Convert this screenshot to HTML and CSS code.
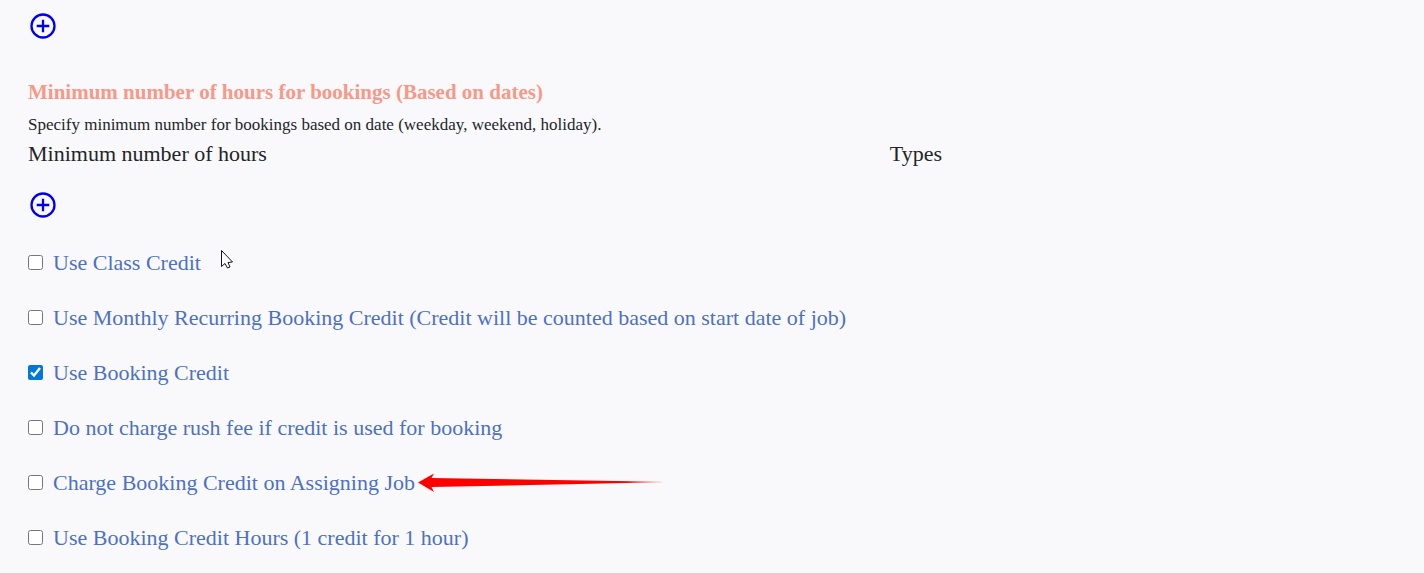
FILE: index.html
```
<!DOCTYPE html>
<html lang="en">
<head>
  <meta charset="UTF-8">
  <meta name="viewport" content="width=device-width, initial-scale=1.0">
  <title>Booking settings</title>
  <link rel="stylesheet" href="styles.css">
</head>
<body>
  <form class="settings">
    <button type="button" class="add-btn" aria-label="Add row">
      <svg width="30" height="30" viewBox="0 0 30 30"><circle cx="15" cy="15" r="11.5"/><path d="M15 8.700v12.600M8.700 15h12.600"/></svg>
    </button>

    <h2 class="section-title">Minimum number of hours for bookings (Based on dates)</h2>
    <p class="section-note">Specify minimum number for bookings based on date (weekday, weekend, holiday).</p>
    <div class="columns">
      <span>Minimum number of hours</span>
      <span>Types</span>
    </div>

    <button type="button" class="add-btn" aria-label="Add minimum hours">
      <svg width="30" height="30" viewBox="0 0 30 30"><circle cx="15" cy="15" r="11.5"/><path d="M15 8.700v12.600M8.700 15h12.600"/></svg>
    </button>

    <div class="options">
      <label class="option"><input type="checkbox" name="class_credit"><span>Use Class Credit</span></label>
      <label class="option"><input type="checkbox" name="monthly_credit"><span>Use Monthly Recurring Booking Credit (Credit will be counted based on start date of job)</span></label>
      <label class="option"><input type="checkbox" name="booking_credit" checked><span>Use Booking Credit</span></label>
      <label class="option"><input type="checkbox" name="no_rush_fee"><span>Do not charge rush fee if credit is used for booking</span></label>
      <label class="option"><input type="checkbox" name="charge_on_assign"><span>Charge Booking Credit on Assigning Job</span></label>
      <label class="option"><input type="checkbox" name="credit_hours"><span>Use Booking Credit Hours (1 credit for 1 hour)</span></label>
    </div>
  </form>

  <svg class="arrow" width="244" height="20" viewBox="0 0 244 20">
    <defs>
      <linearGradient id="tail"><stop offset="0.85" stop-color="#f00"/><stop offset="1" stop-color="#f00" stop-opacity="0.3"/></linearGradient>
    </defs>
    <path fill="url(#tail)" d="M0 9.500 16 0.500 13.500 5 244 8.700V9.300L13.500 14 16 19z"/>
  </svg>
  <svg class="cursor" width="14" height="21" viewBox="0 0 14 21">
    <path d="M1.500 1.500v16l3.500-3 2.500 4.500 2.500-1-2-4.500 4.500-0.500z"/>
  </svg>
</body>
</html>
```

FILE: styles.css
```
* { box-sizing: border-box; }
body { margin: 0; background-color: #f9f9fc; color: #212529; font-family: "Liberation Serif", serif; font-size: 22px; line-height: 30px; }
.settings { padding: 11px 28px 0; }

.add-btn { display: block; width: 30px; height: 30px; padding: 0; border: none; background: none; cursor: pointer; }
.add-btn svg { display: block; fill: none; stroke: #0000ee; stroke-width: 2.3; }

.section-title { margin: 36px 0 0; color: #f89888; font-size: 21px; line-height: 30px; }
.section-note { margin: 3px 0 0; font-size: 17px; line-height: 30px; }
.columns { display: grid; grid-template-columns: 63fr 37fr; margin-bottom: 22px; line-height: 28px; }

.options { display: flex; flex-direction: column; align-items: flex-start; gap: 25px; margin-top: 28px; }
.option { display: flex; align-items: center; gap: 10px; color: #4c71c4; cursor: pointer; }
.option input { flex: none; width: 15px; height: 15px; margin: 0 0 2px; accent-color: #0078d7; }

.arrow { position: absolute; left: 418px; top: 473px; }
.cursor { position: absolute; left: 220px; top: 249px; fill: #fff; stroke: #111122; stroke-width: 1; }
```
